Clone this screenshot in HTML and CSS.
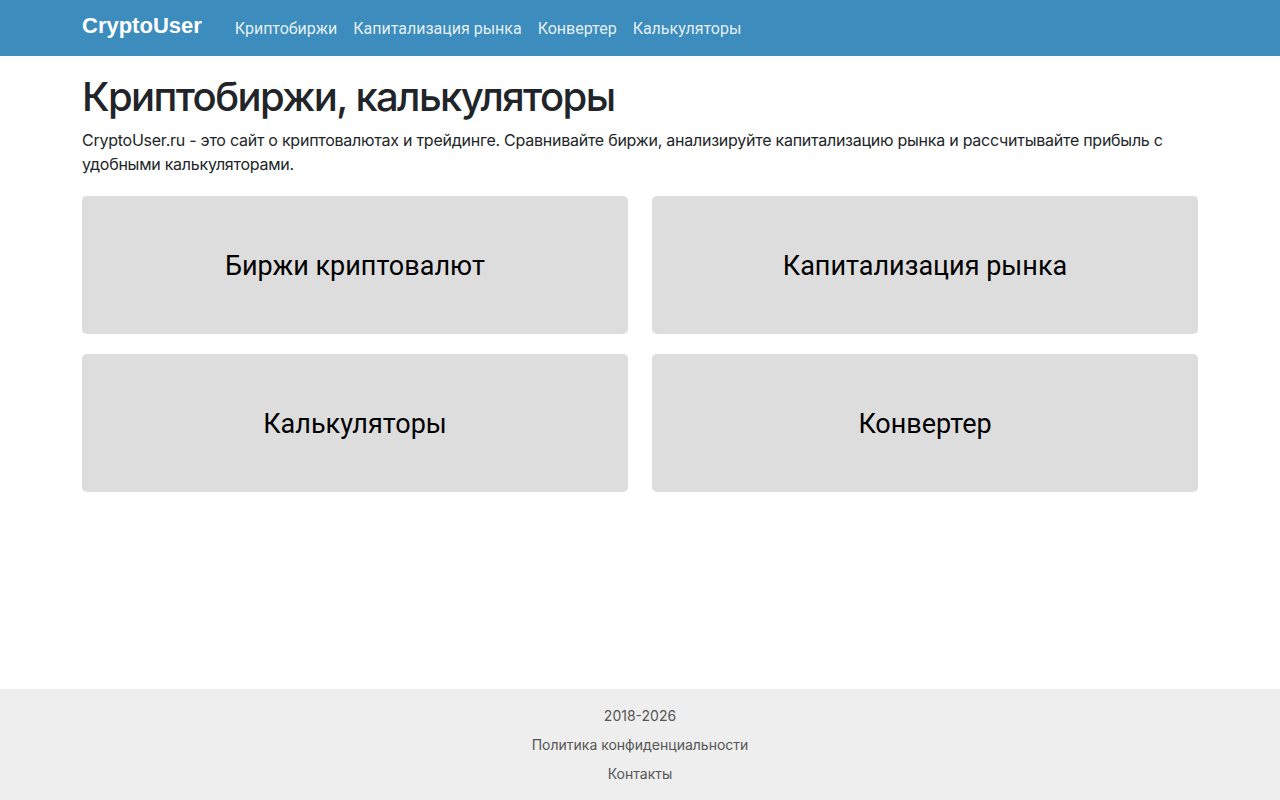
FILE: index.html
```html
<!DOCTYPE html>
<html lang="ru">
<head>
<meta charset="utf-8">
<title>CryptoUser</title>
<link rel="stylesheet" href="styles.css">
</head>
<body>
<div class="page">
<header class="navbar">
  <div class="container nav-inner">
    <a class="brand" href="#">CryptoUser</a>
    <nav class="nav-links">
      <a href="#">Криптобиржи</a>
      <a href="#">Капитализация рынка</a>
      <a href="#">Конвертер</a>
      <a href="#">Калькуляторы</a>
    </nav>
  </div>
</header>
<main class="container main">
  <h1 class="title">Криптобиржи, калькуляторы</h1>
  <p class="lead">CryptoUser.ru - это сайт о криптовалютах и трейдинге. Сравнивайте биржи, анализируйте капитализацию рынка и рассчитывайте прибыль с удобными калькуляторами.</p>
  <div class="cards">
    <a class="card" href="#">Биржи криптовалют</a>
    <a class="card" href="#">Капитализация рынка</a>
    <a class="card" href="#">Калькуляторы</a>
    <a class="card" href="#">Конвертер</a>
  </div>
</main>
<footer class="footer">
  <div class="foot-line">2018-2026</div>
  <a class="foot-line" href="#">Политика конфиденциальности</a>
  <a class="foot-line" href="#">Контакты</a>
</footer>
</div>
</body>
</html>
```
FILE: styles.css
```css
* { box-sizing: border-box; }
html, body { margin: 0; padding: 0; }
body {
  font-family: Inter, "Noto Sans", sans-serif;
  font-size: 16px;
  line-height: 1.5;
  color: #212529;
  background: #fff;
}
a { text-decoration: none; color: inherit; }
.page { min-height: 800px; display: flex; flex-direction: column; }
.container { width: 1140px; margin: 0 auto; padding: 0 12px; }
.navbar { background: #3c8dbd; height: 56px; }
.nav-inner { display: flex; align-items: center; height: 56px; }
.brand {
  font-family: "Liberation Sans", Arial, sans-serif;
  font-weight: 700;
  font-size: 22px;
  color: #fff;
  margin-right: 33px;
  padding-bottom: 6px;
}
.nav-links { display: flex; gap: 16px; padding-top: 2px; }
.nav-links a {
  font-family: Roboto, "Liberation Sans", sans-serif;
  font-size: 16px;
  color: rgba(255,255,255,0.88);
}
.main { flex: 1; padding-top: 17px; }
.title {
  font-size: 40px;
  font-weight: 500;
  line-height: 1.2;
  margin: 0 0 7px;
  letter-spacing: -1.6px;
}
.lead { margin: 0 0 20px; font-size: 16px; line-height: 24px; letter-spacing: -0.25px; }
.cards {
  display: grid;
  grid-template-columns: 1fr 1fr;
  column-gap: 24px;
  row-gap: 20px;
}
.card {
  height: 138px;
  background: #dddddd;
  border-radius: 5px;
  display: flex;
  align-items: center;
  justify-content: center;
  font-family: Roboto, "Liberation Sans", sans-serif;
  font-size: 27px;
  color: #000;
  padding-top: 2px;
}
.footer {
  background: #eeeeee;
  height: 111px;
  padding-top: 12px;
  display: flex;
  flex-direction: column;
  align-items: center;
  font-size: 14px;
  line-height: 29px;
  color: #555;
}
.foot-line { display: block; }
```
